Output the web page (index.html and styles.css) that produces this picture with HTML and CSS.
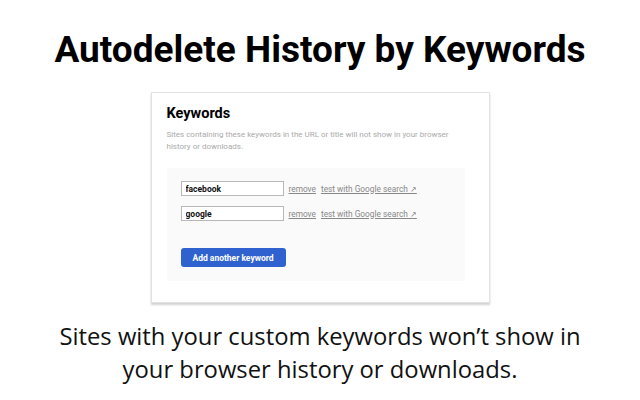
FILE: index.html
```html
<!DOCTYPE html>
<html lang="en">
<head>
  <meta charset="UTF-8">
  <title>Autodelete History by Keywords</title>
  <link rel="stylesheet" href="styles.css">
</head>
<body>
  <h1 class="title">Autodelete History by Keywords</h1>

  <div class="card">
    <h2>Keywords</h2>
    <p class="hint">Sites containing these keywords in the URL or title will not show in your browser history or downloads.</p>

    <div class="panel">
      <div class="row">
        <input class="keyword" type="text" value="facebook">
        <a class="link" href="#">remove</a>
        <a class="link" href="#">test with Google search ↗</a>
      </div>
      <div class="row">
        <input class="keyword" type="text" value="google">
        <a class="link" href="#">remove</a>
        <a class="link" href="#">test with Google search ↗</a>
      </div>
      <button class="add" type="button">Add another keyword</button>
    </div>
  </div>

  <p class="caption">Sites with your custom keywords won’t show in your browser history or downloads.</p>
</body>
</html>
```
FILE: styles.css
```css
body {
  margin: 0;
  background: #fff;
  font-family: Roboto, "Liberation Sans", sans-serif;
  color: #000;
}
.title {
  margin: 0;
  padding-top: 28px;
  text-align: center;
  font-size: 37px;
  font-weight: 700;
  line-height: 44px;
}
.card {
  width: 339px;
  box-sizing: border-box;
  margin: 20px auto 0;
  padding: 11px 24px 21px 15px;
  border: 1px solid #e2e2e2;
  box-shadow: 0 2px 2px rgba(0, 0, 0, 0.18);
  background: #fff;
}
.card h2 {
  margin: 0;
  font-size: 14.5px;
  font-weight: 700;
  line-height: 20px;
}
.hint {
  margin: 5px 0 0;
  font-size: 8px;
  line-height: 12px;
  color: #aaa;
  padding-right: 10px;
}
.panel {
  margin-top: 15px;
  background: #fafafa;
  padding: 13px 14px 14px;
}
.row {
  display: flex;
  align-items: center;
  gap: 5px;
  margin-bottom: 10px;
}
.keyword {
  width: 103px;
  height: 15px;
  box-sizing: border-box;
  border: 1px solid #b8b8b8;
  padding: 0 4px;
  font-family: Roboto, "Liberation Sans", sans-serif;
  font-size: 8.5px;
  font-weight: 700;
  color: #111;
  background: #fff;
}
.link {
  font-size: 8.3px;
  color: #888;
  text-decoration: underline;
}
.add {
  margin-top: 17px;
  width: 105px;
  height: 19px;
  padding: 0;
  border: none;
  border-radius: 3px;
  background: #2f62cf;
  color: #fff;
  font-family: Roboto, "Liberation Sans", sans-serif;
  font-size: 8.5px;
  font-weight: 700;
}
.caption {
  margin: 17px auto 0;
  width: 560px;
  text-align: center;
  font-family: "Open Sans", sans-serif;
  font-size: 23.8px;
  line-height: 33px;
  color: #111;
}
```
